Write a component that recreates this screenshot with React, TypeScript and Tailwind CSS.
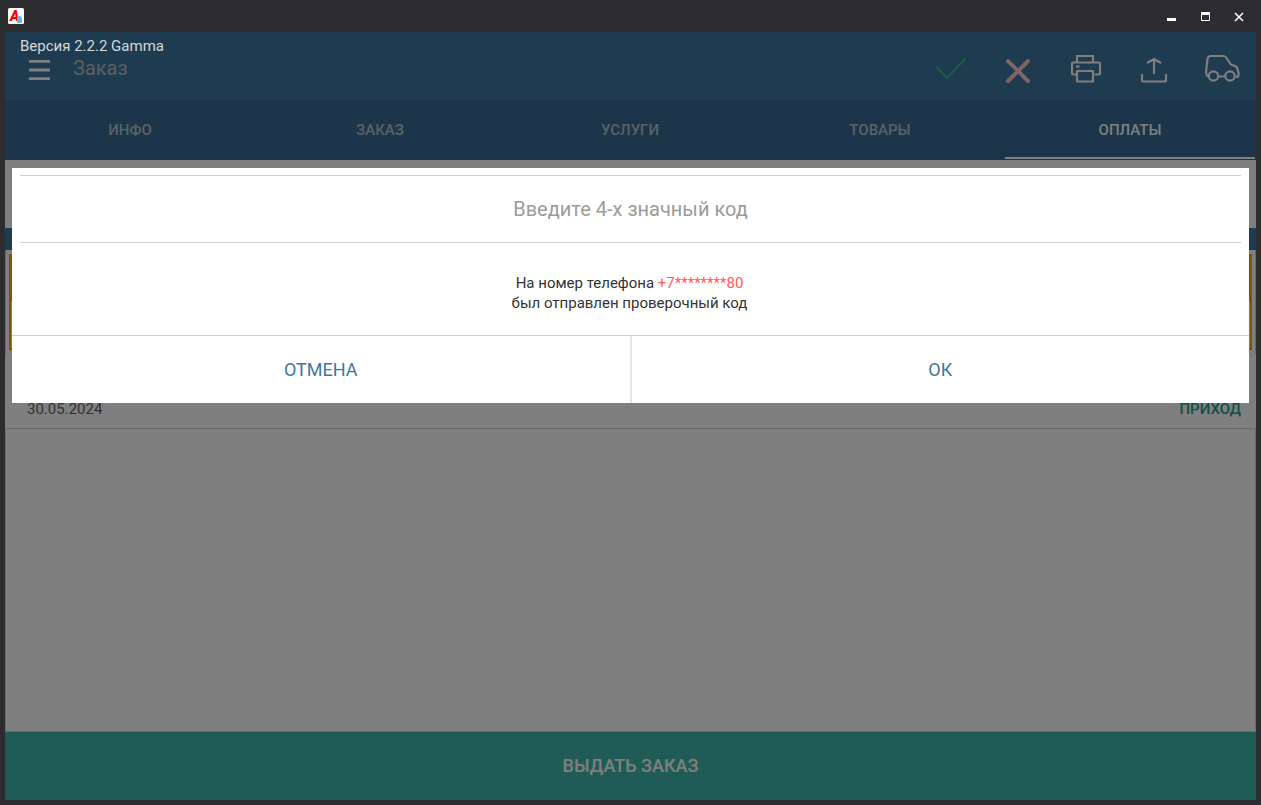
import React, { useState } from 'react';

interface Tab {
    id: string;
    label: string;
}

const TABS: Tab[] = [
    { id: 'info', label: 'ИНФО' },
    { id: 'order', label: 'ЗАКАЗ' },
    { id: 'services', label: 'УСЛУГИ' },
    { id: 'goods', label: 'ТОВАРЫ' },
    { id: 'payments', label: 'ОПЛАТЫ' },
];

const AppLogo = () => (
    <svg viewBox="0 0 16 16" className="h-4 w-4" aria-hidden="true">
        <rect width="16" height="16" rx="1.5" fill="#fff" />
        <text x="2" y="13" fontFamily="Roboto, sans-serif" fontSize="14" fontWeight="900" fontStyle="italic" fill="#ee0000">A</text>
        <path d="M9 15V9.500L10.500 8H12.500L14 9.500V15Z" fill="#64b5f6" />
    </svg>
);

const WindowButton = ({ label, children }: { label: string; children: React.ReactNode }) => (
    <button type="button" aria-label={label} className="flex h-8 w-[34px] items-center justify-center">
        <svg viewBox="0 0 34 32" className="h-8 w-[34px]" fill="none" stroke="#fff">
            {children}
        </svg>
    </button>
);

const TitleBar = () => (
    <div className="flex h-8 items-center justify-between pl-[3px]">
        <AppLogo />
        <div className="flex">
            <WindowButton label="Свернуть">
                <path d="M13 19.500h9" strokeWidth="3" />
            </WindowButton>
            <WindowButton label="Развернуть">
                <path d="M13.500 13v7.500h8V13" />
                <path d="M13 13.500h9" strokeWidth="3" />
            </WindowButton>
            <WindowButton label="Закрыть">
                <path d="M13 13l8 8M21 13l-8 8" strokeWidth="1.500" />
            </WindowButton>
        </div>
    </div>
);

// every toolbar action is a 68px square, drawn on a 68 unit grid
const ToolButton = ({ label, className, children }: { label: string; className: string; children: React.ReactNode }) => (
    <button type="button" aria-label={label} className={className}>
        <svg viewBox="0 0 68 68" className="h-17 w-17" fill="none" stroke="currentColor" strokeWidth="2">
            {children}
        </svg>
    </button>
);

const Toolbar = () => (
    <header className="flex h-17 items-center justify-between bg-[#3e76a0] text-white">
        <div className="flex items-center">
            <ToolButton label="Меню" className="text-white">
                <path d="M24 29.300h21M24 38h21M24 46.700h21" strokeWidth="2.800" />
            </ToolButton>
            <h1 className="pt-1 text-[20px] leading-6 text-[#b4c0c8]">Заказ</h1>
        </div>
        <div className="flex">
            <ToolButton label="Подтвердить" className="text-[#3eb88f]">
                <path d="M20.500 35L31 46L49.500 26.500" />
            </ToolButton>
            <ToolButton label="Отменить" className="text-[#ffc8c8]">
                <path d="M24 29l20 20M44 29l-20 20" strokeWidth="4" strokeLinecap="round" />
            </ToolButton>
            <ToolButton label="Печать" className="text-white">
                <g strokeWidth="2.200">
                    <path d="M25 30V24h16v6" />
                    <path d="M24 42.500h-3q-1 0-1-1V31.500q0-1 1-1h26q1 0 1 1V41.500q0 1-1 1h-4.500" />
                    <path d="M25 39h16v10.500H25z" />
                    <path d="M24 34.500h3.500" />
                </g>
            </ToolButton>
            <ToolButton label="Отправить" className="text-white">
                <path d="M22 42v6q0 1.500 1.500 1.500h21q1.500 0 1.500-1.500v-6M34 42V27M27 31l7-4l7 4" strokeWidth="2.200" />
            </ToolButton>
            <ToolButton label="Автомобиль" className="text-white">
                <path d="M20 44.500Q18 43 18 40L19.500 27q.5-3 3.500-3H35.500q2 0 3 2l4 6q.8 1.200 2.500 1.300q4 .5 4.500 3.700l1 3.500v3q0 1.500-2.500 1.500M30.500 44.500h7" strokeWidth="2.200" />
                <circle cx="25.500" cy="44" r="4.700" strokeWidth="2.200" />
                <circle cx="42" cy="44" r="4.700" strokeWidth="2.200" />
            </ToolButton>
        </div>
    </header>
);

const TabBar = ({ active, onSelect }: { active: string; onSelect: (id: string) => void }) => (
    <nav className="grid h-15 grid-cols-5 bg-[#386a94] pr-px pb-px">
        {TABS.map((tab) => (
            <button
                key={tab.id}
                type="button"
                onClick={() => onSelect(tab.id)}
                className={`border-b-2 pt-[3px] text-[15px] font-medium ${tab.id === active ? 'border-white text-white' : 'border-transparent text-[#b8c4cc]'}`}
            >
                {tab.label}
            </button>
        ))}
    </nav>
);

const PaymentList = () => (
    <main className="flex flex-1 flex-col bg-white">
        <div className="h-17" />
        <div className="h-[22px] bg-[#3e76a0]" />
        <div className="border-x border-[#d2d2d2] px-[3px] py-1">
            <div className="border-2 border-t-0 border-[#ffac00]">
                <div className="h-[47px] bg-[#ffac00]" />
                <div className="h-[47px]" />
            </div>
        </div>
        <div className="flex h-[75px] items-end justify-between border-b border-[#d2d2d2] pr-[15px] pb-[9px] pl-[22px] text-[15px] leading-5">
            <span className="text-[#666]">30.05.2024</span>
            <span className="font-medium text-[#26a088]">ПРИХОД</span>
        </div>
        <div className="flex-1 border border-t-0 border-[#d2d2d2]" />
    </main>
);

const CodeDialog = () => {
    const [code, setCode] = useState('');

    return (
        <form role="dialog" aria-label="Проверочный код" className="mx-[7px] bg-white text-[#333]" onSubmit={(e) => e.preventDefault()}>
            <div className="px-2 pt-[7px]">
                <input
                    value={code}
                    onChange={(e) => setCode(e.target.value)}
                    maxLength={4}
                    inputMode="numeric"
                    aria-label="Введите 4-х значный код"
                    placeholder="Введите 4-х значный код"
                    className="h-17 w-full border-y border-[#cfcfd6] text-center text-[20px] outline-none placeholder:text-[#9b9b9b]"
                />
            </div>
            <p className="pt-[30px] pr-[2px] pb-[22px] text-center text-[15px] leading-5">
                На номер телефона <span className="text-[#ff5a5a]">+7********80</span>
                <br />
                был отправлен проверочный код
            </p>
            <div className="grid h-17 grid-cols-2 border-t border-[#cfcfd6] text-[18px] text-[#3e76a0]">
                <button type="button" className="border-r border-[#e4e4ea]">ОТМЕНА</button>
                <button type="submit" className="border-l border-[#e4e4ea]">ОК</button>
            </div>
        </form>
    );
};

export default function App() {
    const [active, setActive] = useState('payments');

    return (
        <div className="flex min-h-screen flex-col bg-[#2d2d2f] px-[5px] pb-[5px] font-['Roboto',sans-serif]">
            <TitleBar />
            <div className="relative flex flex-1 flex-col">
                <Toolbar />
                <TabBar active={active} onSelect={setActive} />
                <PaymentList />
                <button type="button" className="h-17 bg-[#3eb8aa] pb-[2px] text-[18px] font-medium text-white">
                    ВЫДАТЬ ЗАКАЗ
                </button>

                {/* modal layer */}
                <div className="absolute inset-0 bg-black/50 pt-1">
                    <div className="h-33 pl-[15px] text-[15px] leading-5 text-[#d2d8dc]">Версия 2.2.2 Gamma</div>
                    <CodeDialog />
                </div>
            </div>
        </div>
    );
}
